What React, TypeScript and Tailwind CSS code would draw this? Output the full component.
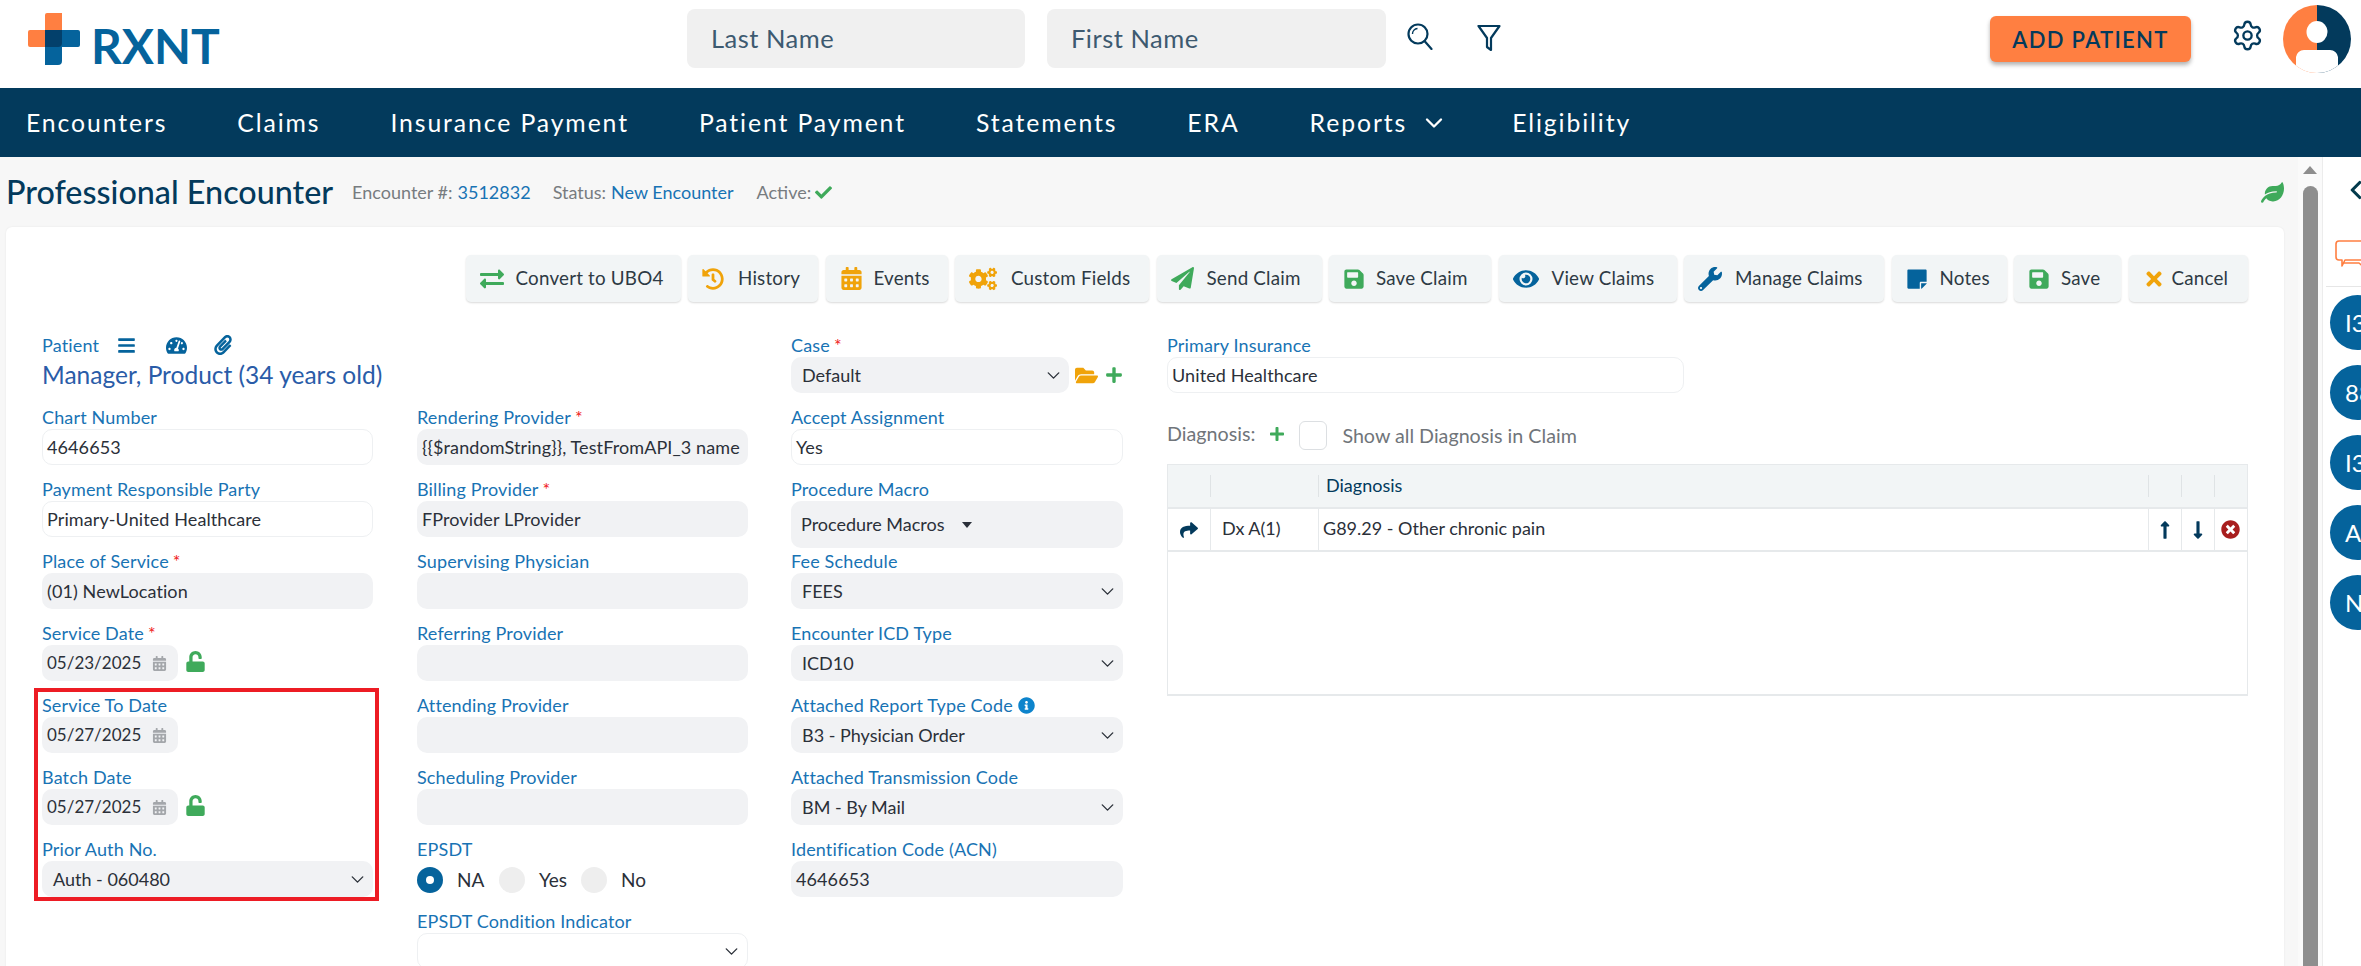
import type { ReactNode } from 'react';
import { ChevronDown, ChevronLeft, Settings } from 'lucide-react';
import {
  FaBars,
  FaCalendarAlt,
  FaCheck,
  FaCogs,
  FaExchangeAlt,
  FaEye,
  FaFolderOpen,
  FaHistory,
  FaInfoCircle,
  FaLeaf,
  FaLongArrowAltDown,
  FaLongArrowAltUp,
  FaPaperPlane,
  FaPaperclip,
  FaPlus,
  FaSave,
  FaShare,
  FaStickyNote,
  FaTachometerAlt,
  FaTimes,
  FaTimesCircle,
  FaUnlock,
  FaWrench,
} from 'react-icons/fa';

const NAV = ['Encounters', 'Claims', 'Insurance Payment', 'Patient Payment', 'Statements', 'ERA', 'Reports', 'Eligibility'];

const TOOLBAR = [
  { label: 'Convert to UBO4', icon: <FaExchangeAlt className="text-[24px] text-[#3faa5b]" />, width: 'w-[215px]', iconBox: 'w-[36px]' },
  { label: 'History', icon: <FaHistory className="text-[22px] text-[#f0a30a]" />, width: 'w-[130px]', iconBox: 'w-[36px]' },
  { label: 'Events', icon: <FaCalendarAlt className="text-[23px] text-[#f0a30a]" />, width: 'w-[122px]', iconBox: 'w-[34px]' },
  { label: 'Custom Fields', icon: <FaCogs className="text-[28px] text-[#f0a30a]" />, width: 'w-[194px]', iconBox: 'w-[42px]' },
  { label: 'Send Claim', icon: <FaPaperPlane className="text-[23px] text-[#3faa5b]" />, width: 'w-[165px]', iconBox: 'w-[36px]' },
  { label: 'Save Claim', icon: <FaSave className="text-[22px] text-[#3faa5b]" />, width: 'w-[162px]', iconBox: 'w-[33px]' },
  { label: 'View Claims', icon: <FaEye className="text-[26px] text-[#05639c]" />, width: 'w-[178px]', iconBox: 'w-[39px]' },
  { label: 'Manage Claims', icon: <FaWrench className="text-[24px] text-[#05639c]" />, width: 'w-[200px]', iconBox: 'w-[37px]' },
  { label: 'Notes', icon: <FaStickyNote className="text-[22px] text-[#05639c]" />, width: 'w-[115px]', iconBox: 'w-[34px]' },
  { label: 'Save', icon: <FaSave className="text-[22px] text-[#3faa5b]" />, width: 'w-[107px]', iconBox: 'w-[33px]' },
  { label: 'Cancel', icon: <FaTimes className="text-[22px] text-[#f0a30a]" />, width: 'w-[119px]', iconBox: 'w-[29px]' },
];

const SIDE_BADGES = ['I3', '88', 'I3', 'A', 'N'];

function Label({ children, required }: { children: ReactNode; required?: boolean }) {
  return (
    <div className="h-[24px] text-[18px] tracking-[0.15px] leading-[24px] text-[#1873b4] whitespace-nowrap">
      {children}
      {required && <span className="ml-1 text-[#f01818]">*</span>}
    </div>
  );
}

function Input({ value, white }: { value?: string; white?: boolean }) {
  return (
    <div
      className={
        'h-[36px] rounded-[10px] text-[18px] tracking-[0.1px] whitespace-nowrap overflow-hidden ' +
        (white ? 'px-[4px] bg-white border border-[#eef0f2] leading-[34px] text-[#2b3039]' : 'px-[5px] bg-[#f1f2f4] leading-[36px] text-[#2b3039]')
      }
    >
      {value}
    </div>
  );
}

function Select({ value, white }: { value?: string; white?: boolean }) {
  return (
    <div
      className={
        'h-[36px] rounded-[10px] pl-[11px] pr-[5px] flex items-center justify-between text-[18px] text-[#2b3039] whitespace-nowrap ' +
        (white ? 'bg-white border border-[#eef0f2]' : 'bg-[#f1f2f4]')
      }
    >
      <span>{value}</span>
      <ChevronDown size={21} strokeWidth={1.6} className="text-[#2b3039]" />
    </div>
  );
}

function Field({ label, required, children }: { label: ReactNode; required?: boolean; children: ReactNode }) {
  return (
    <div className="mb-[12px]">
      <Label required={required}>{label}</Label>
      {children}
    </div>
  );
}

function DateField({ label, value, required, unlocked }: { label: string; value: string; required?: boolean; unlocked?: boolean }) {
  return (
    <Field label={label} required={required}>
      <div className="flex items-center">
        <div className="w-[136px] h-[36px] rounded-[10px] bg-[#f1f2f4] pl-[5px] pr-[11px] flex items-center justify-between text-[17px] text-[#2b3039]">
          <span>{value}</span>
          <FaCalendarAlt className="text-[15px] text-[#a4a7ab]" />
        </div>
        {unlocked && <FaUnlock className="ml-[7px] mb-[3px] text-[21px] text-[#3faa5b]" />}
      </div>
    </Field>
  );
}

function Radio({ label, checked }: { label: string; checked?: boolean }) {
  return (
    <div className="flex items-center">
      <div
        className={
          'w-[26px] h-[26px] rounded-full flex items-center justify-center ' + (checked ? 'bg-[#05639c]' : 'bg-[#eeeeee]')
        }
      >
        {checked && <div className="w-[8px] h-[8px] rounded-full bg-white" />}
      </div>
      <span className="ml-[14px] text-[19px] text-[#2b3039]">{label}</span>
    </div>
  );
}

function Logo() {
  return (
    <div className="flex items-end ml-[28px] mb-[11px]">
      <svg width="52" height="52" viewBox="0 0 52 52">
        <path d="M17 2a2 2 0 0 1 2-2h15v34H2a2 2 0 0 1-2-2V19a2 2 0 0 1 2-2h15z" fill="#ff7f41" />
        <path d="M17 17h33a2 2 0 0 1 2 2v13a2 2 0 0 1-2 2H34v14a4 4 0 0 1-4 4H17z" fill="#05639c" />
        <path d="M17 17h17v13a4 4 0 0 1-4 4H17z" fill="#03406b" />
      </svg>
      <span className="ml-[11px] text-[48px] leading-[38px] font-bold text-[#05639c]">RXNT</span>
    </div>
  );
}

function Avatar() {
  return (
    <svg width="68" height="68" viewBox="0 0 68 68">
      <defs>
        <clipPath id="avatar-clip">
          <circle cx="34" cy="34" r="34" />
        </clipPath>
      </defs>
      <g clipPath="url(#avatar-clip)">
        <rect width="34" height="68" fill="#ff7f41" />
        <rect x="34" width="34" height="68" fill="#033a5c" />
        <ellipse cx="34" cy="27" rx="10.5" ry="11" fill="#fff" />
        <path d="M13 68V52a8 8 0 0 1 8-7h26a8 8 0 0 1 8 7v16z" fill="#fff" />
      </g>
    </svg>
  );
}

function TopBar() {
  return (
    <header className="h-[88px] bg-white flex items-center">
      <div className="w-[687px] shrink-0">
        <Logo />
      </div>
      <div className="w-[338px] h-[59px] mb-[11px] rounded-[8px] bg-[#f0f0f0] pl-[24px] leading-[59px] text-[25.5px] tracking-[0.5px] text-[#3d5a70]">
        Last Name
      </div>
      <div className="ml-[22px] mb-[11px] w-[339px] h-[59px] rounded-[8px] bg-[#f0f0f0] pl-[24px] leading-[59px] text-[25.5px] tracking-[0.5px] text-[#3d5a70]">
        First Name
      </div>
      <svg className="ml-[21px] mb-[16px]" width="26" height="27" viewBox="0 0 26 27" fill="none" stroke="#033a5c" strokeWidth="2.2">
        <circle cx="11" cy="11" r="9.5" />
        <path d="M17.5 18l7 8" strokeLinecap="round" />
        <path d="M5.5 11a5.5 5.5 0 0 1 5-5.5" strokeWidth="1.4" />
      </svg>
      <svg className="ml-[44px] mb-[13px]" width="24" height="28" viewBox="0 0 24 28" fill="none" stroke="#033a5c" strokeWidth="2.2" strokeLinejoin="round">
        <path d="M1.5 2h21L14 14v12l-4-3v-9z" />
      </svg>
      <button className="ml-[489px] w-[201px] h-[46px] rounded-[6px] bg-[#ff7f41] text-[22px] font-semibold tracking-[1.3px] text-[#033a5c] shadow-[0_3px_4px_rgba(0,0,0,0.3)] mb-[10px]">
        ADD PATIENT
      </button>
      <Settings size={33} strokeWidth={1.7} className="ml-[40px] mb-[17px] text-[#033a5c]" />
      <div className="ml-[19px] mb-[10px]">
        <Avatar />
      </div>
    </header>
  );
}

function NavBar() {
  return (
    <nav className="h-[69px] bg-[#033a5c] flex items-center pl-[26px] gap-[70px] text-[24.75px] tracking-[1.9px] text-white">
      {NAV.map(item => (
        <div key={item} className="flex items-center whitespace-nowrap">
          {item}
          {item === 'Reports' && <ChevronDown size={28} strokeWidth={2} className="ml-[13px] -mr-[6px]" />}
        </div>
      ))}
    </nav>
  );
}

function Toolbar() {
  return (
    <div className="flex justify-end gap-[7.5px]">
      {TOOLBAR.map(btn => (
        <div
          key={btn.label}
          className={btn.width + ' h-[47px] rounded-[5px] bg-[#f2f5f6] shadow-[0_1px_2px_rgba(0,0,0,0.15)] pl-[14px] flex items-center text-[18.8px] tracking-[0.2px] text-[#2e3a44] whitespace-nowrap'}
        >
          <span className={btn.iconBox + ' shrink-0'}>{btn.icon}</span>
          {btn.label}
        </div>
      ))}
    </div>
  );
}

function ColumnOne() {
  return (
    <div className="w-[331px]">
      <div className="h-[24px] flex items-center text-[18px] tracking-[0.15px] text-[#1873b4]">
        Patient
        <FaBars className="ml-[18px] text-[19px] text-[#05639c]" />
        <FaTachometerAlt className="ml-[30px] text-[21px] text-[#05639c]" />
        <FaPaperclip className="ml-[26px] text-[20px] text-[#05639c]" />
      </div>
      <div className="h-[48px] text-[24.5px] leading-[36px] text-[#2a5ca8] whitespace-nowrap">Manager, Product (34 years old)</div>
      <Field label="Chart Number">
        <Input value="4646653" white />
      </Field>
      <Field label="Payment Responsible Party">
        <Input value="Primary-United Healthcare" white />
      </Field>
      <Field label="Place of Service" required>
        <Input value="(01) NewLocation" />
      </Field>
      <DateField label="Service Date" value="05/23/2025" required unlocked />
      <div className="-mx-[8px] -mt-[5px] px-[4px] pt-[1px] border-4 border-[#ed1c24] w-[345px]">
        <DateField label="Service To Date" value="05/27/2025" />
        <DateField label="Batch Date" value="05/27/2025" unlocked />
        <Label>Prior Auth No.</Label>
        <div className="w-[331px]">
          <Select value="Auth - 060480" />
        </div>
      </div>
    </div>
  );
}

function ColumnTwo() {
  return (
    <div className="w-[331px] pt-[72px] ml-[44px]">
      <Field label="Rendering Provider" required>
        <Input value="{{$randomString}}, TestFromAPI_3 name" />
      </Field>
      <Field label="Billing Provider" required>
        <Input value="FProvider LProvider" />
      </Field>
      <Field label="Supervising Physician">
        <Input />
      </Field>
      <Field label="Referring Provider">
        <Input />
      </Field>
      <Field label="Attending Provider">
        <Input />
      </Field>
      <Field label="Scheduling Provider">
        <Input />
      </Field>
      <Field label="EPSDT">
        <div className="h-[36px] pt-[2px] grid grid-cols-[82px_82px_82px] items-center">
          <Radio label="NA" checked />
          <Radio label="Yes" />
          <Radio label="No" />
        </div>
      </Field>
      <Field label="EPSDT Condition Indicator">
        <Select white />
      </Field>
    </div>
  );
}

function ColumnThree() {
  return (
    <div className="w-[332px] ml-[43px]">
      <Field label="Case" required>
        <div className="flex items-center">
          <div className="w-[278px]">
            <Select value="Default" />
          </div>
          <FaFolderOpen className="ml-[6px] text-[23px] text-[#f0a30a]" />
          <FaPlus className="ml-[7px] text-[18px] text-[#3faa5b]" />
        </div>
      </Field>
      <Field label="Accept Assignment">
        <Input value="Yes" white />
      </Field>
      <div className="mb-[1px]">
        <Label>Procedure Macro</Label>
        <div className="h-[47px] rounded-[10px] bg-[#f1f2f4] pl-[10px] flex items-center text-[18px] text-[#2b3039]">
          Procedure Macros
          <span className="ml-[17px] w-0 h-0 border-x-[5.5px] border-x-transparent border-t-[6px] border-t-[#2b3039]" />
        </div>
      </div>
      <Field label="Fee Schedule">
        <Select value="FEES" />
      </Field>
      <Field label="Encounter ICD Type">
        <Select value="ICD10" />
      </Field>
      <Field
        label={
          <span className="flex items-center">
            Attached Report Type Code
            <FaInfoCircle className="ml-[5px] text-[17px] text-[#0d84cc]" />
          </span>
        }
      >
        <Select value="B3 - Physician Order" />
      </Field>
      <Field label="Attached Transmission Code">
        <Select value="BM - By Mail" />
      </Field>
      <Field label="Identification Code (ACN)">
        <Input value="4646653" />
      </Field>
    </div>
  );
}

function DiagnosisTable() {
  const cols = 'grid grid-cols-[42px_108px_1fr_33px_33px_33px]';
  return (
    <div className="h-[232px] border border-[#e6e9eb] border-b-2">
      <div className={cols + ' h-[44px] bg-[#f2f5f6] border-b-2 border-[#e6e9eb] items-center text-[18px] text-[#033a5c]'}>
        <div className="h-[22px]" />
        <div className="h-[22px] border-l border-[#dfe3e5]" />
        <div className="h-[22px] border-l border-[#dfe3e5] pl-[7px] leading-[20px]">Diagnosis</div>
        <div className="h-[22px] border-l border-[#dfe3e5]" />
        <div className="h-[22px] border-l border-[#dfe3e5]" />
        <div className="h-[22px] border-l border-[#dfe3e5]" />
      </div>
      <div className={cols + ' h-[43px] border-b-2 border-[#e6e9eb] text-[18px] text-[#2b3039]'}>
        <div className="flex items-center justify-center">
          <FaShare className="text-[18px] text-[#033a5c]" />
        </div>
        <div className="border-l border-[#e6e9eb] pl-[11px] leading-[39px]">Dx A(1)</div>
        <div className="border-l border-[#e6e9eb] pl-[4px] leading-[39px]">G89.29 - Other chronic pain</div>
        <div className="border-l border-[#e6e9eb] flex items-center justify-center">
          <FaLongArrowAltUp className="text-[20px] text-[#033a5c]" />
        </div>
        <div className="border-l border-[#e6e9eb] flex items-center justify-center">
          <FaLongArrowAltDown className="text-[20px] text-[#033a5c]" />
        </div>
        <div className="border-l border-[#e6e9eb] flex items-center justify-center">
          <FaTimesCircle className="text-[19px] text-[#a81e1e]" />
        </div>
      </div>
    </div>
  );
}

function ColumnFour() {
  return (
    <div className="flex-1 ml-[44px]">
      <Label>Primary Insurance</Label>
      <div className="w-[517px]">
        <Input value="United Healthcare" white />
      </div>
      <div className="h-[29px] mt-[28px] flex items-center text-[19.7px] text-[#70757a]">
        <span className="mb-[4px]">Diagnosis:</span>
        <FaPlus className="ml-[14px] mb-[4px] text-[16px] text-[#3faa5b]" />
        <div className="ml-[14px] w-[28px] h-[29px] rounded-[6px] border border-[#dcdfe2] bg-white" />
        <span className="ml-[15px]">Show all Diagnosis in Claim</span>
      </div>
      <div className="mt-[14px]">
        <DiagnosisTable />
      </div>
    </div>
  );
}

function SidePanel() {
  return (
    <aside className="w-[39px] shrink-0 bg-white border-l border-[#ececec] overflow-hidden">
      <div className="w-[90px]">
        <ChevronLeft size={30} strokeWidth={2.5} className="ml-[18px] mt-[18px] text-[#033a4c]" />
        <svg className="ml-[12px] mt-[35px]" width="40" height="32" viewBox="0 0 40 32" fill="none" stroke="#ff7f41" strokeWidth="1.6" strokeLinejoin="round">
          <path d="M4 1h30a3 3 0 0 1 3 3v13a3 3 0 0 1-3 3H10l-3 6v-6H4a3 3 0 0 1-3-3V4a3 3 0 0 1 3-3z" />
          <path d="M8 23h16l6 5v-5" />
        </svg>
        <div className="ml-[3px] mt-[14px] border-t border-[#e6e6e6] pt-[8px]">
          <div className="flex flex-col gap-[15px] ml-[4px]">
            {SIDE_BADGES.map((badge, i) => (
              <div key={i} className="w-[55px] h-[55px] rounded-full bg-[#05639c] text-white text-[24px] leading-[55px] pl-[15px]">
                {badge}
              </div>
            ))}
          </div>
        </div>
      </div>
    </aside>
  );
}

export default function App() {
  return (
    <div className="h-[966px] overflow-hidden bg-white font-['Lato','Liberation_Sans',sans-serif]">
      <TopBar />
      <NavBar />
      <div className="h-[809px] flex bg-[#f7f7f7] overflow-hidden">
        <div className="w-[2284px] shrink-0 pl-[6px]">
          <div className="h-[70px] flex items-center">
            <h1 className="text-[32.3px] font-medium text-[#033a5c] whitespace-nowrap">Professional Encounter</h1>
            <span className="ml-[19px] text-[18px] text-[#777c80]">Encounter #:</span>
            <span className="ml-[5px] text-[18px] text-[#1873b4]">3512832</span>
            <span className="ml-[22px] text-[18px] text-[#777c80]">Status:</span>
            <span className="ml-[5px] text-[18px] text-[#1873b4]">New Encounter</span>
            <span className="ml-[23px] text-[18px] text-[#777c80]">Active:</span>
            <FaCheck className="ml-[4px] text-[17px] text-[#3faa5b]" />
            <FaLeaf className="ml-auto text-[23px] text-[#3faa5b]" />
          </div>
          <div className="h-[800px] rounded-[6px] bg-white shadow-[0_0_2px_rgba(0,0,0,0.08)] pl-[36px] pr-[36.5px] pt-[28px]">
            <Toolbar />
            <div className="flex mt-[31px]">
              <ColumnOne />
              <ColumnTwo />
              <ColumnThree />
              <ColumnFour />
            </div>
          </div>
        </div>
        <div className="w-[38px] shrink-0 pl-[14px]">
          <div className="h-full bg-[#fafafa] pl-[5px] pt-[9px]">
            <div className="w-0 h-0 border-x-[7.5px] border-x-transparent border-b-[8px] border-b-[#8e8e8e]" />
            <div className="w-[15px] h-[800px] mt-[12px] rounded-t-[7.5px] bg-[#8e8e8e]" />
          </div>
        </div>
        <SidePanel />
      </div>
    </div>
  );
}
